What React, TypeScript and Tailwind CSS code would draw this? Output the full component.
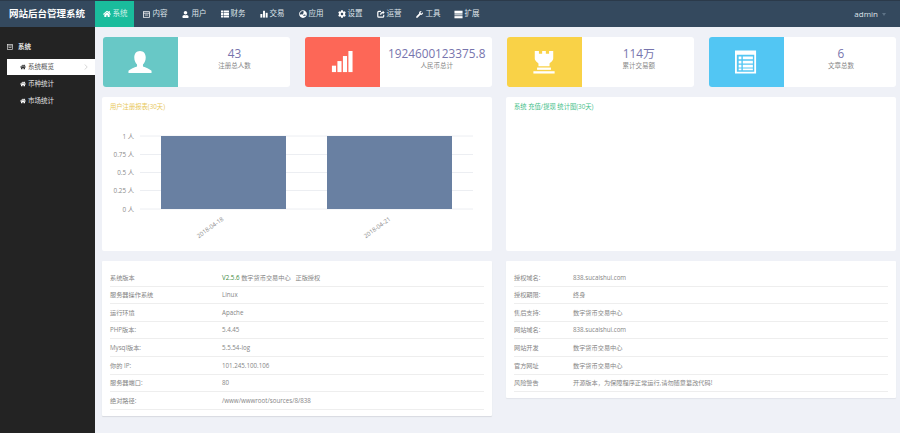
import React from "react";
import { FaHome, FaUser, FaThList, FaGlobeAsia, FaCog, FaWrench } from "react-icons/fa";

const font = "font-['Open_Sans','Noto_Sans_CJK_SC',sans-serif]";

const Box = ({ size = 7 }: { size?: number }) => (
  <svg width={size} height={size} viewBox="0 0 10 10" fill="none" stroke="currentColor" strokeWidth="1.1">
    <rect x="0.8" y="1" width="8.4" height="8" />
    <path d="M0.8 3.2H9.2M2.5 5.8H7.5" />
  </svg>
);
const Bars = ({ size = 8 }: { size?: number }) => (
  <svg width={size} height={size} viewBox="0 0 10 10" fill="currentColor">
    <rect x="0.5" y="5" width="2.4" height="4.5" />
    <rect x="3.8" y="1" width="2.4" height="8.5" />
    <rect x="7.1" y="3.5" width="2.4" height="6" />
  </svg>
);
const Share = ({ size = 8 }: { size?: number }) => (
  <svg width={size} height={size} viewBox="0 0 10 10" fill="none" stroke="currentColor" strokeWidth="1.5">
    <path d="M5 1.8H2.2A1.2 1.2 0 0 0 1 3v4.8A1.2 1.2 0 0 0 2.2 9h5A1.2 1.2 0 0 0 8.4 7.8V6" />
    <path d="M4.5 6C4.6 4 6 3 8 3" />
    <path d="M7.2 0.8L9.6 3L7.2 5.2Z" fill="currentColor" stroke="none" />
  </svg>
);
const Server = ({ size = 9 }: { size?: number }) => (
  <svg width={size} height={size} viewBox="0 0 10 10" fill="currentColor">
    <rect x="0.5" y="0.8" width="9" height="3.2" />
    <rect x="0.5" y="4.8" width="9" height="1.2" />
    <rect x="0.5" y="6.8" width="9" height="2.4" />
  </svg>
);

const navItems: { label: string; icon: React.ReactNode; active?: boolean }[] = [
  { label: "系统", icon: <FaHome size={8} />, active: true },
  { label: "内容", icon: <Box /> },
  { label: "用户", icon: <FaUser size={7} /> },
  { label: "财务", icon: <FaThList size={8} /> },
  { label: "交易", icon: <Bars /> },
  { label: "应用", icon: <FaGlobeAsia size={8} /> },
  { label: "设置", icon: <FaCog size={8} /> },
  { label: "运营", icon: <Share /> },
  { label: "工具", icon: <FaWrench size={7} /> },
  { label: "扩展", icon: <Server /> },
];

const UserIcon = () => (
  <svg width="24" height="24" viewBox="0 0 26 26" fill="#fff">
    <path d="M13 1c4 0 6.2 3 6.2 7 0 3.2-1.3 6-3 7.6v2.2c3 1.2 7 2.4 9.3 4.7v2.5H.5v-2.5c2.3-2.3 6.300-3.500 9.300-4.700v-2.200c-1.700-1.600-3-4.400-3-7.600 0-4 2.200-7 6.200-7z" />
  </svg>
);
const SignalIcon = () => (
  <svg width="22" height="24" viewBox="0 0 24 26" fill="#fff">
    <rect x="1" y="17" width="4.500" height="7" />
    <rect x="7" y="12" width="4.500" height="12" />
    <rect x="13" y="6.500" width="4.500" height="17.500" />
    <rect x="19" y="1" width="4.500" height="23" />
  </svg>
);
const RookIcon = () => (
  <svg width="24" height="24" viewBox="0 0 26 26" fill="#fff">
    <path d="M3 1h4.500v3h3.500v-3h4v3h3.500v-3h4.500v8c0 3-3 4.500-4 5.500v3h-12v-3c-1-1-4-2.500-4-5.500z" />
    <rect x="5.500" y="19" width="15" height="2.500" />
    <rect x="1.500" y="23" width="23" height="2.500" />
  </svg>
);
const ListIcon = () => (
  <svg width="22" height="24" viewBox="0 0 24 26" fill="#fff">
    <path fillRule="evenodd" d="M0 0.500h23v25H0zM2 5v18.500h19V5z" />
    <path d="M4 7h3v3H4zM8.500 7h11v3h-11zM4 11.500h3v3H4zM8.500 11.500h11v3h-11zM4 16h3v3H4zM8.500 16h11v3h-11zM4 20h3v2H4zM8.500 20h11v2h-11z" />
  </svg>
);

const cards = [
  { bg: "bg-[#68c8c6]", icon: <UserIcon />, value: "43", label: "注册总人数" },
  { bg: "bg-[#fd6757]", icon: <SignalIcon />, value: "1924600123375.8", label: "人民币总计" },
  { bg: "bg-[#f9d247]", icon: <RookIcon />, value: "114万", label: "累计交易额" },
  { bg: "bg-[#52c6f3]", icon: <ListIcon />, value: "6", label: "文章总数" },
];

const leftRows: [string, React.ReactNode][] = [
  ["系统版本", <><span className="text-[#3c8a3c]">V2.5.6</span> 数字货币交易中心 &nbsp; 正版授权</>],
  ["服务器操作系统", "Linux"],
  ["运行环境", "Apache"],
  ["PHP版本:", "5.4.45"],
  ["Mysql版本:", "5.5.54-log"],
  ["你的 IP:", "101.245.100.106"],
  ["服务器端口:", "80"],
  ["绝对路径:", "/www/wwwroot/sources/8/838"],
];
const rightRows: [string, string][] = [
  ["授权域名:", "838.sucaishui.com"],
  ["授权期限:", "终身"],
  ["售后支持:", "数字货币交易中心"],
  ["网站域名:", "838.sucaishui.com"],
  ["网站开发", "数字货币交易中心"],
  ["官方网址", "数字货币交易中心"],
  ["风险警告", "开源版本，为保障程序正常运行,请勿随意篡改代码!"],
];

const Chart = () => {
  const ticks: [string, number][] = [["1 人", 12], ["0.75 人", 30.5], ["0.5 人", 48.5], ["0.25 人", 66.5], ["0 人", 85]];
  return (
    <svg width="390" height="125" viewBox="0 0 390 125" className="block">
      {ticks.map(([t, y]) => (
        <g key={t}>
          <line x1="38" x2="371" y1={y} y2={y} stroke="#eceef2" strokeWidth="1" />
          <text x="32" y={y + 2.5} textAnchor="end" fontSize="6.3" fill="#8a8a8a">{t}</text>
        </g>
      ))}
      <rect x="59" y="12" width="125" height="73" fill="#6980a2" />
      <rect x="225" y="12" width="125" height="73" fill="#6980a2" />
      <text transform="translate(122 96) rotate(-36)" textAnchor="end" fontSize="6" fill="#8a8a8a">2018-04-18</text>
      <text transform="translate(289 96) rotate(-36)" textAnchor="end" fontSize="6" fill="#8a8a8a">2018-04-21</text>
    </svg>
  );
};

const InfoTable = ({ rows, labelW }: { rows: [string, React.ReactNode][]; labelW: string }) => (
  <div className="flex flex-col">
    {rows.map(([k, v], i) => (
      <div key={i} className="flex h-[17.6px] items-center border-b border-[#eeeeee] text-[6.2px] text-[#858585]">
        <div className={labelW}>{k}</div>
        <div>{v}</div>
      </div>
    ))}
  </div>
);

export default function App() {
  return (
    <div className={`${font} flex h-[433px] w-[900px] flex-col overflow-hidden bg-[#eff1f7]`}>
      <header className="flex h-[27px] shrink-0 items-stretch border-t border-[#2b3a4a] bg-[#34495e] text-white">
        <div className="flex w-[95px] items-center pl-[9px] text-[9.5px] font-bold">网站后台管理系统</div>
        <nav className="flex">
          {navItems.map((n) => (
            <div key={n.label} className={`flex w-[39px] items-center gap-[1.5px] text-[7.5px] ${n.active ? "bg-[#1abc9c] pl-[7px]" : "pl-[8px]"}`}>
              <span className="flex w-[9px] justify-center">{n.icon}</span>
              <span className={n.active ? "text-[#d5f3ec]" : "text-[#dfe5ea]"}>{n.label}</span>
            </div>
          ))}
        </nav>
        <div className="ml-auto flex items-center gap-[4px] pr-[14px] text-[8px] text-[#dfe5ea]">
          admin
          <span className="h-0 w-0 border-x-[2.5px] border-t-[3px] border-x-transparent border-t-[#5d7286]" />
        </div>
      </header>

      <div className="flex min-h-0 flex-1">
        <aside className="w-[95px] shrink-0 bg-[#232323] pt-[14px] text-[6.5px] text-[#e5e5e5]">
          <div className="flex h-[12px] items-center gap-[5px] pl-[7px] font-bold">
            <Box size={6} />
            系统
          </div>
          <div className="ml-[7px] mt-[6px] flex h-[16px] items-center gap-[2px] bg-white pl-[13px] pr-[7px] text-[#555]">
            <FaHome size={6} className="text-[#333]" />
            系统概览
            <svg width="4" height="6" viewBox="0 0 4 6" fill="none" stroke="#bbb" strokeWidth="0.6" className="ml-auto">
              <path d="M0.8 0.5L3.2 3L0.8 5.500" />
            </svg>
          </div>
          <div className="flex h-[17px] items-center gap-[2px] pl-[20px]">
            <FaHome size={6} className="text-white" />
            币种统计
          </div>
          <div className="flex h-[17px] items-center gap-[2px] pl-[20px]">
            <FaHome size={6} className="text-white" />
            市场统计
          </div>
        </aside>

        <main className="flex min-w-0 flex-1 flex-col gap-[10px] pl-[7px] pr-[4px] pt-[10px]">
          <div className="grid grid-cols-4 gap-x-[15px] pl-[0.5px]">
            {cards.map((c) => (
              <div key={c.label} className="flex h-[50px] overflow-hidden rounded-[3px] bg-white">
                <div className={`flex w-[75px] shrink-0 items-center justify-center ${c.bg}`}>{c.icon}</div>
                <div className="flex flex-1 flex-col items-center justify-center pb-[6px] pl-[2px]">
                  <div className="text-[11.8px] leading-[13px] text-[#7774ad]">{c.value}</div>
                  <div className="text-[6.5px] leading-[11px] text-[#888]">{c.label}</div>
                </div>
              </div>
            ))}
          </div>

          <div className="grid grid-cols-2 gap-x-[14px]">
            <div className="h-[154px] rounded-[2px] bg-white">
              <div className="pl-[8px] pt-[5px] text-[6.3px] leading-[9px] text-[#e8c85a]">用户注册报表(30天)</div>
              <div className="mt-[13px]"><Chart /></div>
            </div>
            <div className="h-[154px] rounded-[2px] bg-white">
              <div className="pl-[8px] pt-[5px] text-[6.3px] leading-[9px] text-[#45c08a]">系统 充值/提现 统计图(30天)</div>
            </div>
          </div>

          <div className="grid grid-cols-2 items-start gap-x-[14px]">
            <div className="rounded-[1px] bg-white px-[8px] pb-[6px] pt-[8px] shadow-[0_1px_1px_#d8dae0]">
              <InfoTable rows={leftRows} labelW="w-[112px]" />
            </div>
            <div className="rounded-[1px] bg-white px-[8px] pb-[6px] pt-[8px] shadow-[0_1px_1px_#e2e4ea]">
              <InfoTable rows={rightRows} labelW="w-[59px]" />
            </div>
          </div>
        </main>
      </div>
    </div>
  );
}
